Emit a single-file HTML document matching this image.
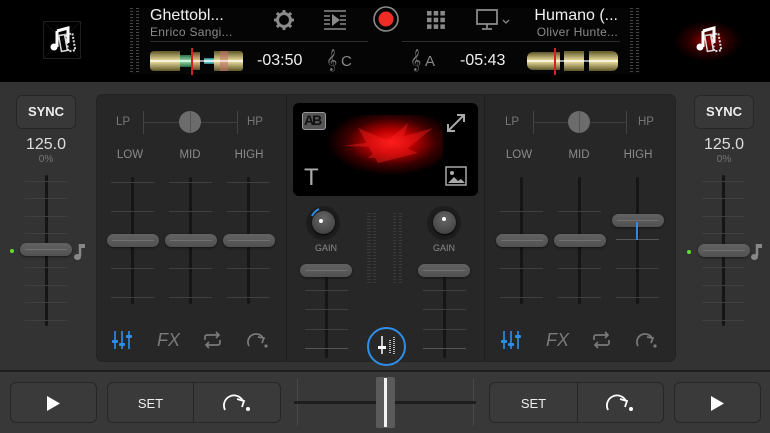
<!DOCTYPE html>
<html><head><meta charset="utf-8"><style>
*{margin:0;padding:0;box-sizing:border-box}
body{width:770px;height:433px;overflow:hidden;background:#333;font-family:"Liberation Sans",sans-serif;position:relative}
.a{position:absolute}
.t{position:absolute;white-space:nowrap}
.top{left:0;top:0;width:770px;height:82px;background:#000}
.track{position:absolute;width:3px;background:#151515;border-radius:2px}
.tick{position:absolute;height:1px;background:#3f3f3f}
.h{position:absolute;width:52px;height:13px;border-radius:7px;background:linear-gradient(#626262,#515151);box-shadow:0 1px 2px rgba(0,0,0,.5)}
.h:after{content:"";position:absolute;left:5px;right:5px;top:6px;height:1px;background:#717171}
.lbl{position:absolute;color:#8a8a8a;font-size:11.5px;transform:translateX(-50%)}
.btn{position:absolute;background:#3a3a3a;border:1px solid #262626;border-radius:6px}
.meter{position:absolute;width:3px;background:repeating-linear-gradient(#3a3a3a 0 1px,transparent 1px 3px)}
.wf{position:absolute;background:linear-gradient(#5e5628,#f0e4a2 50%,#5e5628)}
</style></head><body>
<div class="a top"></div>
<div class="a" style="left:130px;top:8px;width:510px;height:66px;background:#050505"></div>
<div class="meter" style="left:130px;top:8px;height:64px;width:3px;background:repeating-linear-gradient(#444 0 1px,transparent 1px 3px)"></div>
<div class="meter" style="left:136px;top:8px;height:64px;width:3px;background:repeating-linear-gradient(#444 0 1px,transparent 1px 3px)"></div>
<div class="meter" style="left:630px;top:8px;height:64px;width:3px;background:repeating-linear-gradient(#444 0 1px,transparent 1px 3px)"></div>
<div class="meter" style="left:636px;top:8px;height:64px;width:3px;background:repeating-linear-gradient(#444 0 1px,transparent 1px 3px)"></div>
<div class="a" style="left:43px;top:21px;width:38px;height:38px;border:1px solid #1e1e1e;background:linear-gradient(45deg,transparent 49%,#1a1a1a 50%,transparent 51%),linear-gradient(-45deg,transparent 49%,#1a1a1a 50%,transparent 51%)"></div>
<svg class="a" style="left:48px;top:25px" width="30" height="30" viewBox="0 0 30 30"><path d="M9 6l11-3v15" stroke="#fff" stroke-width="3" fill="none"/><path d="M9 6v16" stroke="#fff" stroke-width="3"/><circle cx="6" cy="22" r="3.5" fill="#fff"/><rect x="12" y="10" width="6" height="16" fill="none" stroke="#ddd" stroke-width="1.5" transform="rotate(-10 15 18)"/><rect x="19" y="9" width="7" height="17" fill="none" stroke="#ddd" stroke-width="2" stroke-dasharray="2 1.5" transform="rotate(-10 22 18)"/></svg>
<div class="a" style="left:673px;top:20px;width:70px;height:42px;background:radial-gradient(ellipse at center,rgba(200,0,0,.75) 0,rgba(120,0,0,.35) 40%,transparent 70%)"></div>
<svg class="a" style="left:694px;top:25px" width="30" height="30" viewBox="0 0 30 30"><path d="M9 6l11-3v15" stroke="#fff" stroke-width="3" fill="none"/><path d="M9 6v16" stroke="#fff" stroke-width="3"/><circle cx="6" cy="22" r="3.5" fill="#fff"/><rect x="12" y="10" width="6" height="16" fill="none" stroke="#ddd" stroke-width="1.5" transform="rotate(-10 15 18)"/><rect x="19" y="9" width="7" height="17" fill="none" stroke="#ddd" stroke-width="2" stroke-dasharray="2 1.5" transform="rotate(-10 22 18)"/></svg>
<div class="t" style="left:150px;top:7px;color:#f0f0f0;font-size:16px">Ghettobl...</div>
<div class="t" style="left:150px;top:25px;color:#8a8a8a;font-size:12px;letter-spacing:.3px">Enrico Sangi...</div>
<div class="a" style="left:150px;top:41px;width:218px;height:1px;background:#2c2c2c"></div>
<div class="t" style="right:152px;top:7px;color:#f0f0f0;font-size:16px">Humano (...</div>
<div class="t" style="right:152px;top:25px;color:#8a8a8a;font-size:12px;letter-spacing:.3px">Oliver Hunte...</div>
<div class="a" style="left:402px;top:41px;width:218px;height:1px;background:#2c2c2c"></div>
<!-- left waveform -->
<div class="wf" style="left:150px;top:51px;width:30px;height:20px;border-radius:4px 0 0 4px"></div>
<div class="wf" style="left:180px;top:55px;width:12px;height:12px;background:linear-gradient(#2b6b45,#9fe0b0 50%,#2b6b45)"></div>
<div class="wf" style="left:192px;top:52px;width:8px;height:18px;background:linear-gradient(#6a4a28,#f0c890 50%,#6a4a28)"></div>
<div class="wf" style="left:204px;top:58px;width:16px;height:6px;background:linear-gradient(#2a7b78,#a0f0ee 50%,#2a7b78)"></div>
<div class="wf" style="left:214px;top:51px;width:29px;height:20px;border-radius:0 3px 3px 0"></div>
<div class="a" style="left:220px;top:51px;width:8px;height:20px;background:#c9706a;opacity:.55"></div>
<div class="a" style="left:150px;top:60px;width:93px;height:2px;background:rgba(255,255,255,.6)"></div>
<div class="a" style="left:191px;top:48px;width:2px;height:27px;background:#d42020"></div>
<!-- right waveform -->
<div class="wf" style="left:527px;top:52px;width:33px;height:18px;border-radius:6px 0 0 6px"></div>
<div class="wf" style="left:564px;top:51px;width:20px;height:20px"></div>
<div class="wf" style="left:589px;top:51px;width:29px;height:20px;border-radius:0 6px 6px 0"></div>
<div class="a" style="left:527px;top:60px;width:91px;height:2px;background:rgba(255,255,255,.6)"></div>
<div class="a" style="left:554px;top:48px;width:2px;height:27px;background:#d42020"></div>
<div class="t" style="left:257px;top:52px;color:#eee;font-size:16px">-03:50</div>
<div class="t" style="left:460px;top:52px;color:#eee;font-size:16px">-05:43</div>
<div class="t" style="left:326px;top:50px;color:#777;font-size:19px">𝄞</div>
<div class="t" style="left:341px;top:53px;color:#888;font-size:15px">C</div>
<div class="t" style="left:410px;top:50px;color:#777;font-size:19px">𝄞</div>
<div class="t" style="left:425px;top:53px;color:#888;font-size:15px">A</div>
<svg class="a" style="left:272px;top:8px" width="24" height="24" viewBox="0 0 24 24"><g fill="none" stroke="#8a8a8a"><circle cx="12" cy="12" r="6.5" stroke-width="3"/><path d="M12 2v4M12 18v4M2 12h4M18 12h4M4.9 4.9l2.8 2.8M16.3 16.3l2.8 2.8M4.9 19.1l2.8-2.8M16.3 7.7l2.8-2.8" stroke-width="3"/></g></svg>
<svg class="a" style="left:323px;top:9px" width="24" height="22" viewBox="0 0 24 22"><g stroke="#8a8a8a" stroke-width="1.5"><path d="M1 2h22M1 20h22M1 7h6M1 11h6M1 15h6M17 7h6M17 11h6M17 15h6"/></g><path d="M9 5l8 6-8 6z" fill="#8a8a8a"/></svg>
<svg class="a" style="left:372px;top:5px" width="28" height="28" viewBox="0 0 28 28"><circle cx="14" cy="14" r="12" fill="none" stroke="#8a8a8a" stroke-width="1.6"/><circle cx="14" cy="14" r="7.5" fill="#ee2b24"/></svg>
<svg class="a" style="left:426px;top:10px" width="20" height="20" viewBox="0 0 20 20" fill="#8a8a8a"><rect x="1" y="1" width="4.5" height="4.5"/><rect x="7.7" y="1" width="4.5" height="4.5"/><rect x="14.4" y="1" width="4.5" height="4.5"/><rect x="1" y="7.7" width="4.5" height="4.5"/><rect x="7.7" y="7.7" width="4.5" height="4.5"/><rect x="14.4" y="7.7" width="4.5" height="4.5"/><rect x="1" y="14.4" width="4.5" height="4.5"/><rect x="7.7" y="14.4" width="4.5" height="4.5"/><rect x="14.4" y="14.4" width="4.5" height="4.5"/></svg>
<svg class="a" style="left:476px;top:9px" width="36" height="22" viewBox="0 0 36 22"><rect x="1" y="1" width="20" height="14" fill="none" stroke="#8a8a8a" stroke-width="1.8"/><path d="M11 15v4M6 20h10" stroke="#8a8a8a" stroke-width="1.8"/><path d="M27 11l3 3 3-3" fill="none" stroke="#8a8a8a" stroke-width="1.3"/></svg>
<div class="a" style="left:0;top:82px;width:770px;height:288px;background:#333"></div>
<!-- left deck -->
<div class="btn" style="left:16px;top:95px;width:60px;height:34px;background:#383838"></div>
<div class="t" style="left:16px;top:104px;width:60px;text-align:center;color:#eee;font-size:13px;font-weight:bold">SYNC</div>
<div class="t" style="left:16px;top:136px;width:60px;text-align:center;color:#ddd;font-size:16px">125.0</div>
<div class="t" style="left:16px;top:154px;width:60px;text-align:center;color:#777;font-size:10px">0%</div>
<div class="track" style="left:45px;top:175px;height:151px"></div>
<div class="tick" style="left:25px;top:181px;width:42px"></div><div class="tick" style="left:25px;top:198px;width:42px"></div><div class="tick" style="left:25px;top:216px;width:42px"></div><div class="tick" style="left:25px;top:233px;width:42px"></div><div class="tick" style="left:25px;top:267px;width:42px"></div><div class="tick" style="left:25px;top:285px;width:42px"></div><div class="tick" style="left:25px;top:302px;width:42px"></div><div class="tick" style="left:25px;top:320px;width:42px"></div>
<div class="h" style="left:20px;top:243px"></div>
<div class="a" style="left:10px;top:249px;width:4px;height:4px;border-radius:50%;background:#5ee02a"></div>
<svg class="a" style="left:73px;top:242px" width="14" height="20" viewBox="0 0 14 20"><path d="M7 2v12" stroke="#888" stroke-width="2.5"/><path d="M6 2h6v4h-5z" fill="#888"/><ellipse cx="4.5" cy="15" rx="3.5" ry="3" fill="#888"/></svg>
<!-- right deck -->
<div class="btn" style="left:694px;top:95px;width:60px;height:34px;background:#383838"></div>
<div class="t" style="left:694px;top:104px;width:60px;text-align:center;color:#eee;font-size:13px;font-weight:bold">SYNC</div>
<div class="t" style="left:694px;top:136px;width:60px;text-align:center;color:#ddd;font-size:16px">125.0</div>
<div class="t" style="left:694px;top:154px;width:60px;text-align:center;color:#777;font-size:10px">0%</div>
<div class="track" style="left:722px;top:175px;height:151px"></div>
<div class="tick" style="left:702px;top:181px;width:42px"></div><div class="tick" style="left:702px;top:198px;width:42px"></div><div class="tick" style="left:702px;top:216px;width:42px"></div><div class="tick" style="left:702px;top:233px;width:42px"></div><div class="tick" style="left:702px;top:267px;width:42px"></div><div class="tick" style="left:702px;top:285px;width:42px"></div><div class="tick" style="left:702px;top:302px;width:42px"></div><div class="tick" style="left:702px;top:320px;width:42px"></div>
<div class="h" style="left:698px;top:244px"></div>
<div class="a" style="left:687px;top:250px;width:4px;height:4px;border-radius:50%;background:#5ee02a"></div>
<svg class="a" style="left:750px;top:242px" width="14" height="20" viewBox="0 0 14 20"><path d="M7 2v12" stroke="#888" stroke-width="2.5"/><path d="M6 2h6v4h-5z" fill="#888"/><ellipse cx="4.5" cy="15" rx="3.5" ry="3" fill="#888"/></svg>
<!-- mixer panel -->
<div class="a" style="left:96px;top:94px;width:580px;height:268px;background:#272727;border-radius:7px;border:1px solid #222"></div>
<div class="a" style="left:286px;top:95px;width:1px;height:266px;background:#1d1d1d"></div>
<div class="a" style="left:484px;top:95px;width:1px;height:266px;background:#1d1d1d"></div>
<!-- left EQ -->
<div class="t" style="left:116px;top:116px;color:#777;font-size:11.5px">LP</div>
<div class="t" style="left:247px;top:116px;color:#777;font-size:11.5px">HP</div>
<div class="a" style="left:143px;top:111px;width:1px;height:23px;background:#444"></div>
<div class="a" style="left:237px;top:111px;width:1px;height:23px;background:#444"></div>
<div class="a" style="left:143px;top:122px;width:95px;height:1px;background:#3f3f3f"></div>
<div class="a" style="left:179px;top:111px;width:22px;height:22px;border-radius:50%;background:#6c6c6c"></div>
<div class="a" style="left:190px;top:111px;width:1px;height:22px;background:#555"></div>
<div class="lbl" style="left:130px;top:149px">LOW</div><div class="lbl" style="left:190px;top:149px">MID</div><div class="lbl" style="left:249px;top:149px">HIGH</div>
<div class="track" style="left:131px;top:177px;height:127px"></div>
<div class="track" style="left:189px;top:177px;height:127px"></div>
<div class="track" style="left:247px;top:177px;height:127px"></div>
<div class="tick" style="left:111px;top:182px;width:43px"></div><div class="tick" style="left:111px;top:211px;width:43px"></div><div class="tick" style="left:111px;top:268px;width:43px"></div><div class="tick" style="left:111px;top:297px;width:43px"></div>
<div class="tick" style="left:169px;top:182px;width:43px"></div><div class="tick" style="left:169px;top:211px;width:43px"></div><div class="tick" style="left:169px;top:268px;width:43px"></div><div class="tick" style="left:169px;top:297px;width:43px"></div>
<div class="tick" style="left:227px;top:182px;width:43px"></div><div class="tick" style="left:227px;top:211px;width:43px"></div><div class="tick" style="left:227px;top:268px;width:43px"></div><div class="tick" style="left:227px;top:297px;width:43px"></div>
<div class="h" style="left:107px;top:234px"></div><div class="h" style="left:165px;top:234px"></div><div class="h" style="left:223px;top:234px"></div>
<!-- right EQ -->
<div class="t" style="left:505px;top:116px;color:#777;font-size:11.5px">LP</div>
<div class="t" style="left:638px;top:116px;color:#777;font-size:11.5px">HP</div>
<div class="a" style="left:533px;top:111px;width:1px;height:23px;background:#444"></div>
<div class="a" style="left:626px;top:111px;width:1px;height:23px;background:#444"></div>
<div class="a" style="left:533px;top:122px;width:94px;height:1px;background:#3f3f3f"></div>
<div class="a" style="left:568px;top:111px;width:22px;height:22px;border-radius:50%;background:#6c6c6c"></div>
<div class="a" style="left:579px;top:111px;width:1px;height:22px;background:#555"></div>
<div class="lbl" style="left:519px;top:149px">LOW</div><div class="lbl" style="left:579px;top:149px">MID</div><div class="lbl" style="left:638px;top:149px">HIGH</div>
<div class="track" style="left:520px;top:177px;height:127px"></div>
<div class="track" style="left:578px;top:177px;height:127px"></div>
<div class="track" style="left:636px;top:177px;height:127px"></div>
<div class="tick" style="left:500px;top:211px;width:43px"></div><div class="tick" style="left:500px;top:268px;width:43px"></div><div class="tick" style="left:500px;top:297px;width:43px"></div>
<div class="tick" style="left:558px;top:211px;width:43px"></div><div class="tick" style="left:558px;top:268px;width:43px"></div><div class="tick" style="left:558px;top:297px;width:43px"></div>
<div class="tick" style="left:616px;top:239px;width:43px;background:#555"></div><div class="tick" style="left:616px;top:268px;width:43px"></div><div class="tick" style="left:616px;top:297px;width:43px"></div>
<div class="h" style="left:496px;top:234px"></div><div class="h" style="left:554px;top:234px"></div><div class="h" style="left:612px;top:214px"></div>
<div class="a" style="left:636px;top:222px;width:2px;height:18px;background:#2d8ae6"></div>
<!-- bottom icons -->
<svg class="a" style="left:112px;top:330px" width="20" height="20" viewBox="0 0 20 20"><g stroke="#2f8fe8" stroke-width="1.6"><path d="M3 1v18M10 1v18M17 1v18"/></g><g fill="#2f8fe8"><rect x="0" y="10" width="6" height="3" rx="1"/><rect x="7" y="13" width="6" height="3" rx="1"/><rect x="14" y="5" width="6" height="3" rx="1"/></g></svg>
<div class="t" style="left:157px;top:330px;color:#7a7a7a;font-size:18px;font-style:italic">FX</div>
<svg class="a" style="left:202px;top:330px" width="21" height="20" viewBox="0 0 21 20"><g fill="none" stroke="#7a7a7a" stroke-width="1.7"><path d="M3 10V7a2 2 0 0 1 2-2h12M14 2l3 3-3 3M18 10v3a2 2 0 0 1-2 2H4M7 12l-3 3 3 3"/></g></svg>
<svg class="a" style="left:247px;top:332px" width="22" height="16" viewBox="0 0 22 16"><path d="M2 14A8 8 0 0 1 16 6" fill="none" stroke="#7a7a7a" stroke-width="1.7"/><path d="M11 5l6 1-2 5" fill="none" stroke="#7a7a7a" stroke-width="1.7"/><circle cx="19" cy="14" r="1.6" fill="#7a7a7a"/></svg>
<svg class="a" style="left:501px;top:330px" width="20" height="20" viewBox="0 0 20 20"><g stroke="#2f8fe8" stroke-width="1.6"><path d="M3 1v18M10 1v18M17 1v18"/></g><g fill="#2f8fe8"><rect x="0" y="10" width="6" height="3" rx="1"/><rect x="7" y="13" width="6" height="3" rx="1"/><rect x="14" y="5" width="6" height="3" rx="1"/></g></svg>
<div class="t" style="left:546px;top:330px;color:#7a7a7a;font-size:18px;font-style:italic">FX</div>
<svg class="a" style="left:591px;top:330px" width="21" height="20" viewBox="0 0 21 20"><g fill="none" stroke="#7a7a7a" stroke-width="1.7"><path d="M3 10V7a2 2 0 0 1 2-2h12M14 2l3 3-3 3M18 10v3a2 2 0 0 1-2 2H4M7 12l-3 3 3 3"/></g></svg>
<svg class="a" style="left:636px;top:332px" width="22" height="16" viewBox="0 0 22 16"><path d="M2 14A8 8 0 0 1 16 6" fill="none" stroke="#7a7a7a" stroke-width="1.7"/><path d="M11 5l6 1-2 5" fill="none" stroke="#7a7a7a" stroke-width="1.7"/><circle cx="19" cy="14" r="1.6" fill="#7a7a7a"/></svg>
<!-- center video -->
<div class="a" style="left:293px;top:103px;width:185px;height:93px;background:#000;border-radius:6px;overflow:hidden">
 <div class="a" style="left:35px;top:12px;width:115px;height:60px;background:radial-gradient(ellipse at 55% 45%,#ff1a1a 0,#b00 25%,rgba(120,0,0,.5) 50%,transparent 72%)"></div>
 <svg class="a" style="left:45px;top:15px" width="100" height="55" viewBox="0 0 100 55"><g fill="#ff2222" opacity=".4"><polygon points="5,28 60,20 95,10 70,30"/><polygon points="20,10 80,35 40,45"/><polygon points="30,40 70,5 60,38"/></g></svg>
</div>
<div class="a" style="left:302px;top:112px;width:24px;height:18px;border:1.5px solid #9a9a9a;border-radius:3px;background:#555"></div>
<div class="t" style="left:304px;top:112px;color:#111;font-size:14px;font-weight:bold;letter-spacing:-2px">AB</div>
<svg class="a" style="left:445px;top:112px" width="22" height="22" viewBox="0 0 22 22"><g stroke="#aaa" stroke-width="2" fill="none"><path d="M4 18L18 4M12 3h7v7M3 12v7h7"/></g></svg>
<div class="t" style="left:304px;top:164px;color:#aaa;font-size:24px">T</div>
<svg class="a" style="left:445px;top:166px" width="22" height="20" viewBox="0 0 22 20"><rect x="1" y="1" width="20" height="18" fill="none" stroke="#aaa" stroke-width="1.5"/><circle cx="7" cy="7" r="2" fill="#aaa"/><path d="M3 17l6-6 4 4 3-2 4 4z" fill="#aaa"/></svg>
<!-- gain knobs -->
<div class="a" style="left:306px;top:206px;width:34px;height:34px;border-radius:50%;background:#1d1d1d"></div>
<svg class="a" style="left:306px;top:206px" width="34" height="34" viewBox="0 0 34 34"><path d="M6 10A15 15 0 0 1 13 3" fill="none" stroke="#2f8fe8" stroke-width="2"/></svg>
<div class="a" style="left:312px;top:211px;width:23px;height:23px;border-radius:50%;background:radial-gradient(circle at 50% 35%,#666,#3a3a3a);box-shadow:0 1px 2px #000"></div>
<div class="a" style="left:319px;top:219px;width:4px;height:4px;border-radius:50%;background:#fff"></div>
<div class="a" style="left:427px;top:206px;width:34px;height:34px;border-radius:50%;background:#1d1d1d"></div>
<div class="a" style="left:433px;top:211px;width:23px;height:23px;border-radius:50%;background:radial-gradient(circle at 50% 35%,#666,#3a3a3a);box-shadow:0 1px 2px #000"></div>
<div class="a" style="left:442px;top:217px;width:4px;height:4px;border-radius:50%;background:#fff"></div>
<div class="lbl" style="left:326px;top:243px;font-size:9px">GAIN</div>
<div class="lbl" style="left:444px;top:243px;font-size:9px">GAIN</div>
<div class="meter" style="left:367px;top:213px;height:70px;width:4px"></div>
<div class="meter" style="left:373px;top:213px;height:70px;width:3px"></div>
<div class="meter" style="left:393px;top:213px;height:70px;width:3px"></div>
<div class="meter" style="left:399px;top:213px;height:70px;width:3px"></div>
<div class="track" style="left:325px;top:272px;height:86px"></div>
<div class="tick" style="left:305px;top:290px;width:43px"></div><div class="tick" style="left:305px;top:309px;width:43px"></div><div class="tick" style="left:305px;top:329px;width:43px"></div><div class="tick" style="left:305px;top:348px;width:43px;background:#555"></div>
<div class="h" style="left:300px;top:264px"></div>
<div class="track" style="left:443px;top:272px;height:86px"></div>
<div class="tick" style="left:423px;top:290px;width:43px"></div><div class="tick" style="left:423px;top:309px;width:43px"></div><div class="tick" style="left:423px;top:329px;width:43px"></div><div class="tick" style="left:423px;top:348px;width:43px;background:#555"></div>
<div class="h" style="left:418px;top:264px"></div>
<div class="a" style="left:367px;top:327px;width:39px;height:39px;border-radius:50%;border:2px solid #2f8fe8;background:#272727"></div>
<svg class="a" style="left:375px;top:334px" width="24" height="24" viewBox="0 0 24 24"><path d="M7 2v18" stroke="#fff" stroke-width="1.5"/><rect x="3" y="12" width="8" height="3" fill="#fff"/><g stroke="#bbb" stroke-width="2" stroke-dasharray="1 1"><path d="M15 6v14M19 3v17"/></g></svg>
<!-- bottom bar -->
<div class="a" style="left:0;top:370px;width:770px;height:63px;background:#383838;border-top:2px solid #1e1e1e"></div>
<div class="btn" style="left:10px;top:382px;width:87px;height:41px"></div>
<svg class="a" style="left:46px;top:396px" width="14" height="15" viewBox="0 0 14 15"><path d="M1 0l13 7.5L1 15z" fill="#fff"/></svg>
<div class="btn" style="left:107px;top:382px;width:174px;height:41px"></div>
<div class="a" style="left:193px;top:383px;width:1px;height:39px;background:#262626"></div>
<div class="t" style="left:107px;top:396px;width:87px;text-align:center;color:#eee;font-size:13px">SET</div>
<svg class="a" style="left:223px;top:393px" width="28" height="20" viewBox="0 0 28 20"><path d="M2 17A10 10 0 0 1 20 8" fill="none" stroke="#fff" stroke-width="1.8"/><path d="M14 6l7 2-2 6" fill="none" stroke="#fff" stroke-width="1.8"/><circle cx="25" cy="16" r="2" fill="#fff"/></svg>
<div class="btn" style="left:489px;top:382px;width:175px;height:41px"></div>
<div class="a" style="left:577px;top:383px;width:1px;height:39px;background:#262626"></div>
<div class="t" style="left:490px;top:396px;width:87px;text-align:center;color:#eee;font-size:13px">SET</div>
<svg class="a" style="left:606px;top:393px" width="28" height="20" viewBox="0 0 28 20"><path d="M2 17A10 10 0 0 1 20 8" fill="none" stroke="#fff" stroke-width="1.8"/><path d="M14 6l7 2-2 6" fill="none" stroke="#fff" stroke-width="1.8"/><circle cx="25" cy="16" r="2" fill="#fff"/></svg>
<div class="btn" style="left:674px;top:382px;width:87px;height:41px"></div>
<svg class="a" style="left:710px;top:396px" width="14" height="15" viewBox="0 0 14 15"><path d="M1 0l13 7.5L1 15z" fill="#fff"/></svg>
<div class="a" style="left:297px;top:379px;width:1px;height:47px;background:#4a4a4a"></div>
<div class="a" style="left:473px;top:379px;width:1px;height:47px;background:#4a4a4a"></div>
<div class="a" style="left:294px;top:401px;width:182px;height:3px;background:#1d1d1d"></div>
<div class="a" style="left:376px;top:377px;width:19px;height:51px;background:#5a5a5a;border-radius:2px"></div>
<div class="a" style="left:384px;top:378px;width:3px;height:49px;background:#f2f2f2"></div>
</body></html>
